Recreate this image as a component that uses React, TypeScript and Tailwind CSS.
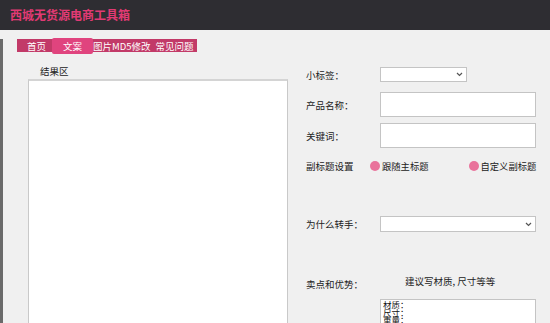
import React from 'react';

const FONT = { fontFamily: '"Noto Sans CJK SC", "Microsoft YaHei", sans-serif' };

function Chevron() {
  return (
    <svg width="7" height="5" viewBox="0 0 7 5" className="text-[#555]">
      <path d="M1 1 L3.5 3.5 L6 1" fill="none" stroke="currentColor" strokeWidth="1.2" />
    </svg>
  );
}

function Label({ children }: { children: React.ReactNode }) {
  return <div className="w-[74px] shrink-0 text-[9.5px] leading-[12px] text-[#222] whitespace-nowrap">{children}</div>;
}

function Radio({ label }: { label: string }) {
  return (
    <div className="flex items-center gap-[2px]">
      <span className="w-[10px] h-[10px] rounded-full bg-[#e9739b]" />
      <span className="text-[9.3px] leading-[12px] text-[#222] whitespace-nowrap">{label}</span>
    </div>
  );
}

export default function App() {
  return (
    <div className="w-[550px] h-[323px] overflow-hidden bg-[#f0f0f0]" style={FONT}>
      <div className="h-[30px] bg-[#2e2d32] pl-[10px] flex items-center">
        <span className="text-[12px] leading-[14px] font-bold text-[#e23a74] whitespace-nowrap">西城无货源电商工具箱</span>
      </div>

      <div className="h-[293px] border-l-[3px] border-[#6a6a6a]">
        {/* tab bar */}
        <div className="mt-[9px] ml-[14px] w-[180px] h-[13px] bg-[#c23a68] flex items-center text-white text-[9.5px] leading-[12px] whitespace-nowrap">
          <span className="w-[35px] pl-[10px]">首页</span>
          <span className="w-[41px] h-[16px] bg-[#e0447e] rounded-[2px] flex items-center justify-center">文案</span>
          <span>图片MD5修改</span>
          <span className="ml-[5px]">常见问题</span>
        </div>

        <div className="flex">
          {/* result area */}
          <div className="ml-[25px] w-[260px]">
            <div className="mt-[13px] pl-[12px] text-[9.5px] leading-[12px] text-[#222]">结果区</div>
            <div className="mt-[2px] h-[260px] bg-white border border-[#c9c9c9] border-t-[2px] border-t-[#d4d4d4]" />
          </div>

          {/* form */}
          <div className="ml-[18px] flex-1 flex flex-col">
            <div className="mt-[15px] flex items-center">
              <Label>小标签：</Label>
              <div className="w-[87px] h-[15px] bg-white border border-[#c4c4c4] flex items-center justify-end pr-[3px]">
                <Chevron />
              </div>
            </div>

            <div className="mt-[10px] flex items-center">
              <Label>产品名称：</Label>
              <div className="w-[156px] h-[25px] bg-white border border-[#c4c4c4]" />
            </div>

            <div className="mt-[6px] flex items-center">
              <Label>关键词：</Label>
              <div className="w-[156px] h-[25px] bg-white border border-[#c4c4c4]" />
            </div>

            <div className="mt-[12px] flex items-center">
              <div className="w-[64px] shrink-0 text-[9.5px] leading-[12px] text-[#222]">副标题设置</div>
              <Radio label="跟随主标题" />
              <div className="ml-[40px]">
                <Radio label="自定义副标题" />
              </div>
            </div>

            <div className="mt-[44px] flex items-center">
              <Label>为什么转手：</Label>
              <div className="w-[156px] h-[16px] bg-white border border-[#c4c4c4] flex items-center justify-end pr-[3px]">
                <Chevron />
              </div>
            </div>

            <div className="mt-[43px] flex items-start">
              <div className="pt-[3px]">
                <Label>卖点和优势：</Label>
              </div>
              <div className="pl-[25px] text-[9.5px] leading-[12px] text-[#222] whitespace-nowrap">建议写材质, 尺寸等等</div>
            </div>

            <div className="mt-[9px] ml-[74px] w-[156px] h-[60px] bg-white border border-[#c4c4c4] px-[2px] pt-[1px] text-[8.5px] leading-[7.5px] text-[#111] whitespace-pre">
              {'材质：\n尺寸：\n重量：'}
            </div>
          </div>
        </div>
      </div>
    </div>
  );
}
